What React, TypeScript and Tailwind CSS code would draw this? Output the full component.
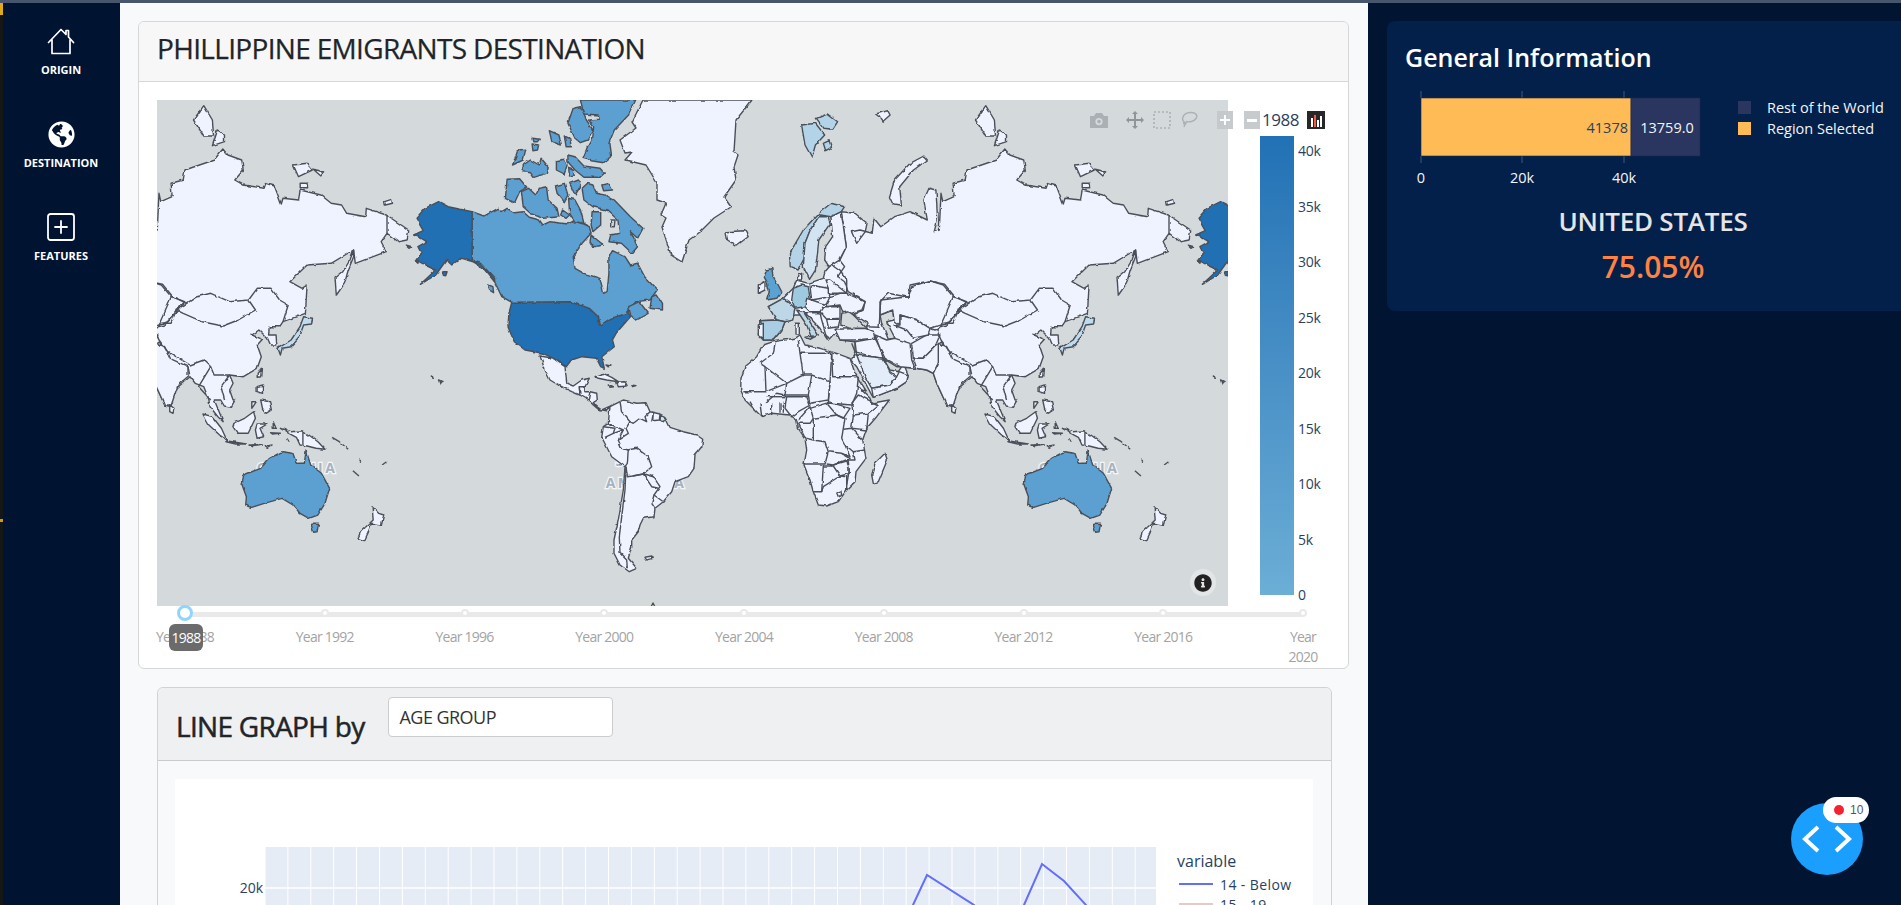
import React from 'react';
import { FaGlobeAmericas, FaInfoCircle } from 'react-icons/fa';

// crop origin + scale, so the map outlines can be read straight off the reference
type T = [number, number, number, number];
const C5: T = [150, 100, 2.8, 3];
const C6: T = [700, 100, 2.904, 3];
const C7R: T = [932, 400, 2.8, 3];
const C5R: T = [932, 100, 2.8, 3];
const C10: T = [740, 260, 3, 3];
const C11: T = [730, 370, 3, 3];
const C12: T = [540, 350, 3, 3];

const pts = (t: T, s: string) =>
  s.trim().split(/\s+/).map((p) => {
    const [x, y] = p.split(',').map(Number);
    return `${(t[0] + x / t[2]).toFixed(1)},${(t[1] + y / t[3]).toFixed(1)}`;
  }).join(' ');

const LAND = '#eff3ff';
const SEA = '#d4d9dc';
const CAN = '#5b9fd1';
const USA = '#2070b4';

const shapes: [string, string][] = [
  // eurasia
  [LAND, [
    pts(C6, '410,335 450,340 485,370 480,395 455,430 440,395 465,390 500,400 505,355 525,380 565,350 610,335 660,360 650,300 665,265 685,270 690,355 680,395 695,390 700,280 705,305 738,290 735,250 770,240 775,210 860,180 885,147 900,165 940,180 945,210 920,240 945,255 1005,265 1010,250 1035,258 1055,312 1060,295 1105,300 1110,270 1170,285 1200,310 1230,315 1245,340 1300,350 1302,325 1360,345 1425,390 1420,420 1395,425 1362,400 1345,425 1360,455 1270,490 1265,450 1240,465 1200,490 1130,495 1080,545 1115,565 1130,555 1125,640 1060,665 1050,680 1020,680 1018,705 1040,705 1042,738 1025,738 1015,715 990,690 970,705 1000,718 985,735 997,770 985,805 945,830 905,825 915,850 905,870 915,900'),
    pts(C7R, '240,0 228,22 208,18 198,0 180,0 205,65 190,50 168,20 165,0'),
    pts(C6, '845,900 830,860 805,850 790,830 745,870 732,900'),
    pts(C10, '640,440 620,435 590,370 580,340 560,330 530,325 495,322 505,345 500,365 470,385 400,412 395,405 350,320 332,300 345,275 345,245 300,240 290,215 268,240 250,210 235,185 205,165 165,165 135,185 125,210 100,240 70,240 55,225 60,182 110,180 85,140 130,115 145,100 160,85 170,60 205,70 250,55 255,35 275,12 300,0'),
    pts(C6, '425,440'),
  ].join(' ')],
  [LAND, pts(C6, '380,350 410,335 425,440 405,480 375,500 362,480 365,440 385,410')],
  ['#b5d3e7', pts(C6, '260,460 300,390 345,340 380,310 420,320 410,335 380,350 350,345 320,390 305,430 305,470 285,510 262,500')],
  ['#d2e3f2', pts(C6, '345,350 372,350 378,370 345,420 340,470 335,510 318,538 300,500 305,430 320,390')],
  [LAND, pts(C6, '75,395 130,392 140,410 105,437 80,420')],
  ['#b3d3e8', pts(C6, '295,75 335,70 362,105 335,135 325,172 305,135')],
  ['#b3d3e8', pts(C6, '338,55 370,42 400,65 385,88 360,85')],
  ['#b3d3e8', pts(C6, '358,130 375,122 382,142 365,152')],
  [LAND, pts(C6, '510,42 545,32 552,45 530,65 520,50')],
  [LAND, pts(C6, '550,290 565,240 610,190 650,168 660,180 620,210 580,260 585,315 560,312')],
  [LAND, pts(C6, '830,17 855,60 858,108 830,108 800,60')],
  [LAND, pts(C6, '870,90 890,105 890,125 855,137')],
  [LAND, pts(C6, '1090,195 1130,190 1145,210 1105,230')],
  [LAND, pts(C6, '1148,208 1178,215 1170,228')],
  [LAND, pts(C6, '1110,250 1130,250 1132,263 1110,263')],
  [LAND, pts(C6, '1355,305 1375,298 1378,310 1357,315')],
  // europe
  ['#5aa2d2', pts(C10, '80,30 95,25 100,50 112,70 125,95 110,115 80,120 88,95 80,65 72,50')],
  [LAND, pts(C10, '55,75 75,65 75,90 55,100')],
  ['#bdd7e7', pts(C10, '85,140 130,115 145,125 165,145 158,180 135,185 110,180')],
  ['#a9cde5', pts(C10, '60,182 110,180 135,185 125,210 100,240 70,240 70,200')],
  [LAND, pts(C10, '55,195 70,190 70,235 55,225')],
  ['#9ecae1', pts(C10, '160,85 185,75 205,80 210,115 195,140 165,145 155,120')],
  [LAND, pts(C10, '175,45 185,40 185,60 170,60')],
  ['#bdd7e7', pts(C10, '170,150 190,155 235,225 215,235 200,195')],
  ['#bdd7e7', pts(C10, '195,232 220,228 212,238')],
  [LAND, pts(C10, '168,190 178,190 178,222 168,222')],
  [LAND, pts(C10, '210,75 265,85 270,110 215,120')],
  [LAND, pts(C10, '270,60 320,100 300,100 265,100 265,85 255,60')],
  [LAND, pts(C10, '270,110 300,100 320,100 375,125 370,150 340,165 310,160 300,135 255,140')],
  [LAND, pts(C10, '200,115 215,120 260,135 240,155 210,155 195,140')],
  [LAND, pts(C10, '250,140 300,140 300,175 260,178 240,155')],
  [LAND, pts(C10, '260,178 300,178 295,200 265,205')],
  [LAND, pts(C10, '195,158 240,158 245,180 262,238 240,205')],
  [LAND, pts(C10, '285,208 375,205 400,215 405,235 345,240 300,240')],
  // seas
  [SEA, pts(C10, '305,160 325,155 350,170 385,190 380,205 330,205 302,195')],
  [SEA, pts(C10, '420,165 458,150 462,180 440,185 465,235 445,238 425,190')],
  [SEA, pts(C10, '430,295 470,320 485,320 475,335 450,330')],
  // middle east / central asia
  [LAND, pts(C10, '345,245 405,235 420,265 430,295 395,290 350,285')],
  ['#e3edf9', pts(C10, '350,285 395,290 430,295 450,335 470,350 450,375 395,385 375,350')],
  [LAND, pts(C10, '395,385 450,375 470,350 478,335 505,345 500,365 470,385 400,412')],
  [LAND, pts(C10, '405,225 440,240 465,235 510,250 515,300 525,325 480,320 435,295 420,265')],
  [LAND, pts(C10, '515,250 560,225 600,225 585,260 550,295 520,295')],
  [LAND, pts(C10, '520,295 550,295 585,260 605,245 620,295 595,310 580,340 560,330 530,325')],
  [LAND, pts(C10, '595,250 620,260 635,295 690,320 695,345 660,375 640,435 620,435 590,370 580,340 595,310')],
  [LAND, pts(C10, '635,435 648,445 645,460 635,455')],
  [LAND, pts(C10, '420,125 445,100 505,112 515,80 570,62 610,75 640,110 680,125 660,150 630,185 570,205 530,180 480,165 480,195 462,180 458,150 420,165')],
  [LAND, pts(C10, '462,195 480,195 480,165 530,180 570,205 565,225 520,235 500,210')],
  // asia islands
  ['#bfdcef', pts(C5R, '430,650 455,655 452,672 430,675 425,690 420,710 395,740 370,745 365,765 358,745 395,720 420,680')],
  [LAND, pts(C5R, '570,450 560,480 540,515 518,535 522,585 545,550 555,510 570,470')],
  [LAND, pts(C5R, '303,820 312,808 310,830 303,832')],
  [LAND, pts(C5R, '300,860 315,855 315,880 300,875')],
  [LAND, pts(C7R, '310,0 335,5 340,30 325,40 315,25')],
  [LAND, pts(C7R, '285,5 298,5 285,25')],
  [LAND, pts(C7R, '148,42 175,50 200,85 215,120 195,105 165,75')],
  [LAND, pts(C7R, '212,122 270,132 240,132 213,125')],
  [LAND, pts(C7R, '235,70 265,55 290,35 295,55 275,100 245,100 232,80')],
  [LAND, pts(C7R, '300,72 328,72 308,85 318,110 300,115 295,90')],
  [LAND, pts(C7R, '365,85 395,95 425,92 445,105 470,125 490,148 465,145 440,138 420,135 410,112 385,98')],
  [LAND, pts(C7R, '345,65 353,85 345,85')],
  [LAND, pts(C7R, '335,98 365,100 340,102')],
  [LAND, pts(C7R, '280,135 315,135 290,140')],
  [LAND, pts(C7R, '320,140 342,135 325,145')],
  // australia, nz
  [CAN, pts(C7R, '262,225 310,205 335,175 370,155 400,160 410,190 432,190 437,152 450,195 480,220 503,265 490,310 470,345 445,355 420,340 400,315 370,295 320,310 285,322 268,315 270,290 258,255')],
  [CAN, pts(C7R, '450,370 472,370 468,395 458,397')],
  [LAND, pts(C7R, '622,320 640,340 655,345 648,375 620,370 610,400 600,422 582,415 590,395 625,360')],
  // africa
  [LAND, [
    pts(C10, '100,245 70,255 50,290 15,320 3,355'),
    pts(C11, '32,60 45,90 70,115 95,140 125,130 180,135 200,150 205,175 225,205 230,240 222,285 240,330 250,365 265,405 290,408 325,395 350,360 375,335 378,305 408,265 398,210 410,175 440,140 478,90 425,100 420,85 385,50'),
    pts(C10, '380,395 345,340 330,295 290,280 240,265 195,255 180,225 165,235'),
  ].join(' ')],
  [LAND, pts(C11, '465,250 472,270 445,335 430,340 425,315 435,280')],
  // north america
  [LAND, pts(C12, '0,18 40,25 60,40 75,50 80,100 100,108 125,90 148,85 135,110 118,110 120,135 95,125 55,105 30,90 15,60')],
  [LAND, pts(C12, '118,110 135,110 135,125 150,125 170,130 172,150 160,158 170,170 185,180 212,168 200,182 175,178 160,165 145,150 120,135')],
  [USA, pts(C5, '1013,607 1180,605 1230,625 1255,650 1258,675 1290,655 1335,630 1345,650 1325,675 1305,700 1295,720 1300,740 1265,770 1272,805 1262,800 1250,775 1210,770 1180,780 1165,800 1130,775 1100,760 1050,750 1020,725 1002,680 1005,640')],
  [CAN, pts(C5, '902,335 935,348 975,325 985,335 1000,325 1020,338 1045,335 1062,352 1090,360 1100,375 1120,365 1170,372 1190,360 1230,380 1235,400 1210,430 1185,470 1190,505 1215,520 1260,535 1270,580 1280,575 1285,520 1285,470 1295,452 1330,470 1345,495 1365,490 1385,530 1420,570 1400,600 1360,605 1335,640 1290,655 1262,675 1255,650 1230,625 1180,605 1013,607 985,590 965,545 930,500 902,483')],
  [USA, pts(C5, '808,305 835,320 902,335 902,483 925,490 965,535 965,545 940,510 905,485 870,475 845,495 830,480 800,525 757,553 800,510 770,495 745,480 760,460 750,440 775,425 760,415 738,405 765,392 745,355 770,325')],
  [USA, pts(C5, '820,515 832,515 828,527 818,525')],
  [USA, pts(C5, '715,435 733,440 725,445')],
  [USA, pts(C5, '742,482 752,482 750,490')],
  [USA, pts(C5, '788,828 792,832 790,836')],
  [USA, pts(C5, '808,840 818,845 812,852')],
  [CAN, pts(C5, '948,555 960,560 962,578 950,570')],
  [CAN, pts(C5, '1185,25 1205,20 1215,40 1222,60 1228,70 1240,90 1225,120 1205,128 1190,115 1170,70')],
  [CAN, pts(C5, '1205,0 1360,0 1340,45 1300,90 1285,130 1290,170 1270,188 1235,182 1212,175 1225,140 1240,110 1242,80 1228,60 1258,58 1255,45 1215,42')],
  [CAN, pts(C5, '1118,92 1145,105 1152,135 1125,125')],
  [CAN, pts(C5, '1160,108 1175,115 1180,140 1165,140')],
  [CAN, pts(C5, '1072,115 1090,118 1085,125 1075,125')],
  [CAN, pts(C5, '1070,132 1088,135 1085,150 1072,152')],
  [CAN, pts(C5, '1030,150 1052,148 1045,180 1015,195')],
  [CAN, pts(C5, '1045,195 1065,180 1090,195 1095,175 1115,200 1110,220 1075,232 1065,218 1045,215')],
  [CAN, pts(C5, '1138,182 1160,178 1168,195 1160,222 1138,210')],
  [CAN, pts(C5, '1172,205 1185,210 1188,225 1175,228')],
  [CAN, pts(C5, '1170,165 1190,170 1215,198 1260,205 1272,220 1260,232 1215,232 1190,210 1170,185')],
  [CAN, pts(C5, '1000,238 1035,236 1055,262 1035,275 1020,310 995,295')],
  [CAN, pts(C5, '1040,275 1060,265 1080,285 1090,265 1110,260 1115,300 1140,325 1145,350 1100,355 1065,340 1045,320')],
  [CAN, pts(C5, '1135,258 1160,250 1170,285 1160,305 1140,280')],
  [CAN, pts(C5, '1175,250 1200,240 1208,255 1190,285')],
  [CAN, pts(C5, '1210,265 1225,250 1240,255 1250,280 1275,285 1300,300 1345,350 1380,385 1365,415 1345,395 1365,440 1350,460 1320,430 1285,425 1290,405 1315,400 1310,360 1280,330 1240,320 1215,300')],
  [CAN, pts(C5, '1265,255 1285,250 1295,270 1270,272')],
  [CAN, pts(C5, '1172,295 1190,300 1205,330 1215,370 1190,365 1175,340')],
  [CAN, pts(C5, '1238,335 1262,335 1262,375 1240,395 1235,375')],
  [CAN, pts(C5, '1155,330 1175,345 1165,355 1150,345')],
  [SEA, pts(C5, '1290,360 1302,360 1300,380 1290,380')],
  [CAN, pts(C5, '1235,405 1270,435 1240,440 1232,425')],
  [CAN, pts(C5, '1405,590 1420,585 1435,610 1435,630 1400,625')],
  [CAN, pts(C5, '1340,620 1370,605 1395,640 1360,660 1345,645')],
  // greenland, page coordinates
  [LAND, '643,100 632,122 636,128 620,140 625,153 632,152 625,160 646,165 657,183 657,200 666,203 661,215 666,218 662,227 671,255 682,262 689,240 700,232 714,218 731,207 724,197 736,180 734,167 738,155 734,152 736,120 752,100'],
  // caribbean
  [LAND, pts(C12, '165,80 190,70 215,82 235,95 200,90 175,85')],
  [LAND, pts(C12, '230,97 255,95 262,108 235,110')],
  [LAND, pts(C12, '205,105 218,110 207,112')],
  [LAND, pts(C12, '275,105 288,107 278,110')],
  [LAND, pts(C12, '198,45 213,48 204,50')],
  // south america
  [LAND, pts(C12, '210,170 240,155 250,150 290,160 318,158 330,185 360,192 375,200 390,232 430,245 470,255 488,268 485,290 465,315 462,355 445,380 405,395 395,425 370,455 345,475 342,500 310,505 300,525 295,545 275,570 275,590 265,625 290,655 268,665 240,645 222,610 222,570 235,510 250,420 255,350 215,320 185,262 190,230 205,220')],
  ['#cfe2f2', pts(C12, '362,195 378,205 370,215 360,212')],
  [LAND, pts(C12, '315,622 335,618 340,625 320,630')],
  [LAND, '651,607 653,603 655,607'],
];

const lines: [T, string][] = [
  [C6, '1362,345 1362,400'],
  [C6, '405,480 420,500 400,530 420,545 430,575 480,605 470,630 440,640 480,680 520,682 525,600 605,590 610,555 665,543 710,553 740,590 780,610 810,590 850,580 905,605 960,600 985,565 1025,565 1050,600 1075,615 1060,665'],
  [C6, '780,610 750,630 770,640 825,665 885,678 930,660 980,630 960,600'],
  [C6, '750,630 735,670 700,670 690,695 700,720 725,755 790,795 830,780 850,800 860,825 905,825'],
  [C6, '850,800 815,860 850,900'],
  [C6, '905,825 880,860 890,900'],
  [C10, '275,12 300,30 320,60 320,100'],
  [C10, '640,110 600,200 620,195 680,125'],
  [C10, '600,205 585,210 570,205'],
  [C10, '690,320 690,345'],
  [C10, '340,290 345,275 395,290'],
  [C10, '60,310 100,280 105,250'],
  [C10, '60,310 75,320 78,395 10,395'],
  [C10, '75,320 140,370 190,345 180,280 175,240'],
  [C10, '180,280 275,280 278,350 350,350'],
  [C10, '190,345 215,345 270,365 275,280'],
  [C10, '78,395 140,370 135,405 110,400 75,430'],
  [C10, '135,405 205,405 215,345'],
  [C10, '205,405 210,430 265,420 270,365'],
  [C10, '270,365 265,430 275,430 335,435 350,400 355,350'],
  [C11, '170,80 230,80 240,105 205,125 185,140 165,115 170,80'],
  [C11, '205,150 240,110 250,145 240,160 205,160'],
  [C11, '240,115 290,100 320,135 250,145'],
  [C11, '295,95 360,115 340,145 320,135'],
  [C11, '365,100 385,75 425,95 445,105 415,130 370,135 365,100'],
  [C11, '370,135 365,175 410,180 415,130'],
  [C11, '250,145 250,210 228,205'],
  [C11, '320,135 345,145 340,175 335,205 345,225 360,260 335,250 295,245 285,215 250,210'],
  [C11, '340,178 365,175 398,210'],
  [C11, '340,220 370,245 405,240'],
  [C11, '295,245 285,282 222,282'],
  [C11, '335,250 360,265 310,285 290,282'],
  [C11, '280,285 275,365 250,365'],
  [C11, '280,288 310,288 330,318 280,350 275,365'],
  [C11, '310,285 355,272 358,310 330,318 350,320 350,360'],
  [C11, '370,245 375,270 350,270 358,300 350,345'],
  [C11, '320,368 333,363 335,375 325,380 320,368'],
  [C11, '125,100 125,135'],
  [C11, '150,100 150,128'],
  [C11, '160,95 160,128'],
  [C11, '90,100 95,140'],
  [C11, '60,95 75,120'],
  [C11, '110,80 170,80'],
  [C11, '205,160 225,200'],
  [C12, '240,155 245,185 270,215 258,235 265,250 235,270 250,240 205,220'],
  [C12, '270,215 280,220 300,205 320,215 315,200 330,185'],
  [C12, '335,215 340,190 338,212 358,210 360,192'],
  [C12, '190,230 225,235 220,250 195,262'],
  [C12, '220,250 250,240'],
  [C12, '235,270 245,295 265,300 262,340 255,350'],
  [C12, '262,300 290,295 325,320 335,350 310,372 340,380 360,410 342,435 370,455'],
  [C12, '335,460 342,435'],
  [C12, '335,460 345,475'],
  [C12, '310,372 278,378 262,380 258,350'],
  [C12, '278,378 310,372 335,410 355,415'],
  [C12, '258,350 255,420 245,500 238,560 240,610 260,630 262,655'],
  [C12, '135,110 135,125'],
  [C12, '150,125 145,150'],
  [C7R, '428,95 428,138'],
  [C7R, '510,112 530,125 555,148'],
  [C7R, '585,175 590,188'],
  [C7R, '650,195 665,183'],
  [C7R, '568,212 585,228'],
  [C7R, '385,115 390,125'],
  [C10, '345,275 335,250'],
];

const World = () => (
  <g>
    <g fontFamily="'Open Sans', sans-serif" fontSize="14" fontWeight="700" letterSpacing="2.5" textAnchor="middle" fill="#a6b2be" stroke="#f4f6f8" strokeWidth="2.5" paintOrder="stroke">
      <text x="1079" y="473">OCEANIA</text>
      <text x="646" y="466">SOUTH</text>
      <text x="646" y="488">AMERICA</text>
    </g>
    <g stroke="#4a5059" strokeWidth="1.4" strokeLinejoin="round" filter="url(#rough)">
      {shapes.map(([fill, p], i) => (
        <polygon key={i} points={p} fill={fill} />
      ))}
      {lines.map(([t, p], i) => (
        <polyline key={i} points={pts(t, p)} fill="none" />
      ))}
    </g>
  </g>
);

const WorldMap = () => (
  <svg viewBox="157 100 1071 506" className="block w-[1071px] h-[506px] shrink-0 bg-[#d4d9dc]">
    <defs>
      {/* roughens the hand traced coastlines a bit */}
      <filter id="rough" x="-5%" y="-5%" width="110%" height="110%">
        <feTurbulence type="fractalNoise" baseFrequency="0.14" numOctaves="2" seed="4" result="n" />
        <feDisplacementMap in="SourceGraphic" in2="n" scale="3" xChannelSelector="R" yChannelSelector="G" />
      </filter>
    </defs>
    <g transform="translate(-782 0)"><World /></g>
    <World />
    <g transform="translate(782 0)"><World /></g>
  </svg>
);

const Modebar = () => (
  <div className="absolute left-[933px] top-[10px] flex items-center h-[20px] text-[#a9aeb2] opacity-95">
    <svg width="18" height="16" viewBox="0 0 18 16" className="mr-[18px]" fill="currentColor">
      <path d="M0 4h4l2-3h6l2 3h4v12H0zM9 6a3.6 3.6 0 1 0 0 7.2A3.6 3.6 0 0 0 9 6zm0 1.8a1.8 1.8 0 1 1 0 3.6 1.8 1.8 0 0 1 0-3.6z" fillRule="evenodd" />
    </svg>
    <svg width="18" height="18" viewBox="0 0 18 18" className="mr-[9px] text-[#8c9296]" fill="currentColor">
      <path d="M9 0l3 3h-2v5h5V6l3 3-3 3v-2h-5v5h2l-3 3-3-3h2v-5H3v2L0 9l3-3v2h5V3H6z" />
    </svg>
    <svg width="18" height="18" viewBox="0 0 18 18" className="mr-[9px]" fill="none" stroke="currentColor" strokeWidth="1.6" strokeDasharray="2 2">
      <rect x="1" y="1" width="16" height="16" />
    </svg>
    <svg width="18" height="18" viewBox="0 0 18 18" className="mr-[19px]" fill="none" stroke="currentColor" strokeWidth="1.4">
      <path d="M4 11C1 8 3 2 10 1.500c6-.5 8 3 6 6-2 3-7 4-10 3M4 11c-1 2 1 3 2 1.500 0-1-2-1.500-2-1.500M5 13l-1 3" />
    </svg>
    <span className="w-[16px] h-[18px] mr-[11px] bg-[#c6c9cb] flex items-center justify-center">
      <svg width="10" height="10" viewBox="0 0 10 10" fill="#fff"><path d="M4 0h2v4h4v2H6v4H4V6H0V4h4z" /></svg>
    </span>
    <span className="w-[16px] h-[18px] bg-[#c6c9cb] flex items-center justify-center">
      <svg width="10" height="3" viewBox="0 0 10 3" fill="#fff"><path d="M0 0h10v3H0z" /></svg>
    </span>
    <span className="ml-[47px] w-[18px] h-[18px] bg-[#1c1c1c] flex items-end justify-center gap-[1px] pb-[2px]">
      <i className="block w-[2px] h-[9px] bg-white" />
      <i className="block w-[2px] h-[12px] bg-[#ef553b]" />
      <i className="block w-[2px] h-[7px] bg-white" />
      <i className="block w-[2px] h-[11px] bg-white" />
    </span>
  </div>
);

const colorTicks = ['40k', '35k', '30k', '25k', '20k', '15k', '10k', '5k', '0'];
const years = [1988, 1992, 1996, 2000, 2004, 2008, 2012, 2016, 2020];

const Slider = () => (
  <div className="relative ml-[28px] mr-[45px] mt-[5px] h-[57px]">
    <div className="h-[5px] bg-[#e9e9e9] rounded-full relative top-[1px]">
      <div className="absolute inset-x-0 top-[-2px] flex justify-between">
        {years.map((y) => (
          <span key={y} className="block w-0 relative">
            <span className="absolute left-[-4px] top-[-1px] w-[8px] h-[8px] rounded-full bg-white border-2 border-[#e9e9e9]" />
          </span>
        ))}
      </div>
    </div>
    <div className="flex justify-between mt-[11px] text-[14px] leading-[20px] text-[#a3a3a3] tracking-[-0.055em]">
      {years.map((y) => (
        <span key={y} className="block w-0 flex justify-center">
          {y === 2020 ? (
            <span className="block shrink-0 w-[40px] text-center">Year {y}</span>
          ) : (
            <span className="block shrink-0 whitespace-nowrap">Year {y}</span>
          )}
        </span>
      ))}
    </div>
    {/* handle + tooltip */}
    <div className="absolute left-[-8px] top-[-6px] w-[16px] h-[16px] rounded-full bg-white border-[3px] border-[#91d5ff]" />
    <div className="absolute left-[-16px] top-[13px] w-[34px] h-[27px] rounded-[6px] bg-[#6b6b6b] text-white text-[14px] tracking-[-0.05em] flex items-center justify-center">1988</div>
  </div>
);

const LineChart = () => {
  const xs = Array.from({ length: 39 }, (_, i) => 90 + i * 22.9);
  return (
    <svg viewBox="0 0 1138 500" className="block w-[1138px] h-[500px] bg-white" fontFamily="'Open Sans', sans-serif">
      <rect x="90" y="68" width="891" height="432" fill="#e5ecf6" />
      {xs.map((x) => (
        <line key={x} x1={x} x2={x} y1="68" y2="500" stroke="#fff" strokeWidth="1" />
      ))}
      <line x1="90" x2="981" y1="109" y2="109" stroke="#fff" strokeWidth="1.5" />
      <text x="88" y="114" textAnchor="end" fontSize="14" fill="#2a3f5f">20k</text>
      <polyline points="700,190 738,126 752,96 799,126 825,160 849,126 867,85 889,102 911,126 940,180" fill="none" stroke="#636efa" strokeWidth="2" />
      <text x="1002" y="88" fontSize="16" fill="#2a3f5f">variable</text>
      <line x1="1004" x2="1038" y1="105" y2="105" stroke="#636efa" strokeWidth="2" />
      <text x="1045" y="111" fontSize="14" fill="#2a3f5f" letterSpacing="0.4">14 - Below</text>
      <line x1="1004" x2="1038" y1="125" y2="125" stroke="#f5c4ba" strokeWidth="2" />
      <text x="1045" y="131" fontSize="14" fill="#2a3f5f" letterSpacing="0.4">15 - 19</text>
    </svg>
  );
};

const InfoChart = () => (
  <svg viewBox="0 0 532 110" className="block w-[532px] h-[110px]" fontFamily="'Open Sans', sans-serif">
    {[34, 135, 237].map((x) => (
      <g key={x} stroke="#3f5878" strokeWidth="1">
        <line x1={x} x2={x} y1="3" y2="10" />
        <line x1={x} x2={x} y1="68" y2="75" />
      </g>
    ))}
    <rect x="34" y="10" width="210" height="58" fill="#ffbb55" stroke="#1d2a4d" strokeWidth="0.6" />
    <rect x="244" y="10" width="69" height="58" fill="#2a3560" stroke="#1d2a4d" strokeWidth="0.6" />
    <text x="241" y="45" textAnchor="end" fontSize="14.500" fill="#2a3f5f">41378</text>
    <text x="280" y="45" textAnchor="middle" fontSize="14.500" fill="#f2f5fa">13759.0</text>
    {[['0', 34], ['20k', 135], ['40k', 237]].map(([t, x]) => (
      <text key={t} x={x} y="95" textAnchor="middle" fontSize="14.500" fill="#f2f5fa">{t}</text>
    ))}
    <rect x="351" y="13" width="13" height="13" fill="#2a3560" />
    <rect x="351" y="34" width="13" height="13" fill="#ffbb55" />
    <text x="380" y="25" fontSize="14.500" fill="#f2f5fa">Rest of the World</text>
    <text x="380" y="46" fontSize="14.500" fill="#f2f5fa">Region Selected</text>
  </svg>
);

const navItems = [
  {
    label: 'ORIGIN',
    icon: (
      <svg width="28" height="27" viewBox="0 0 28 27" fill="none" stroke="#fff" strokeWidth="1.7" strokeLinejoin="round" strokeLinecap="round">
        <path d="M1.500 14.500L14 1.500l5 5V2.500h2.500v6.500L26.500 14.500M5 11.500V25.500h18V11.500" />
      </svg>
    ),
  },
  { label: 'DESTINATION', icon: <FaGlobeAmericas className="text-white" size={27} /> },
  {
    label: 'FEATURES',
    icon: (
      <svg width="28" height="28" viewBox="0 0 28 28" fill="none" stroke="#fff" strokeWidth="1.8" strokeLinecap="round">
        <rect x="1" y="1" width="26" height="26" rx="2.500" />
        <path d="M14 8v12M8 14h12" />
      </svg>
    ),
  },
];

const App: React.FC = () => {
  return (
    <div className="w-[1901px] h-[905px] overflow-hidden flex flex-col bg-[#011532] font-['Open_Sans',sans-serif]">
      <div className="h-[3px] shrink-0 bg-[#47566c]" />
      <div className="flex-1 flex min-h-0">
        <div className="w-[3px] shrink-0 flex flex-col bg-[#161616]">
          <div className="h-[12px] bg-[#e0ac16]" />
          <div className="h-[504px]" />
          <div className="h-[3px] bg-[#c99a1c]" />
        </div>
        <nav className="w-[117px] shrink-0 bg-[#001330] flex flex-col items-center pt-[24px] pr-[1px]">
          {navItems.map((item) => (
            <div key={item.label} className="h-[93px] flex flex-col items-center">
              <div className="h-[28px] flex items-center justify-center">{item.icon}</div>
              <span className="mt-[7px] text-white text-[11px] leading-[16px] font-bold tracking-normal">{item.label}</span>
            </div>
          ))}
        </nav>

        <main className="w-[1248px] shrink-0 bg-[#f8f9fa] overflow-hidden">
          <section className="ml-[18px] mt-[18px] w-[1211px] h-[648px] rounded-[6px] border border-[#d6d7d8] bg-white">
            <header className="h-[60px] bg-[#f7f7f7] border-b border-[#d6d7d8] rounded-t-[6px] pl-[18px] pb-[8px] flex items-center">
              <h1 className="text-[28px] text-[#212529] tracking-[-0.024em] leading-none [-webkit-text-stroke:0.25px_#212529]">PHILLIPPINE EMIGRANTS DESTINATION</h1>
            </header>
            <div className="pl-[18px] pt-[18px]">
              <div className="relative flex">
                <WorldMap />
                <div className="ml-[32px] pt-[36px] flex">
                  <div className="w-[34px] h-[459px] bg-linear-to-b from-[#2171b5] to-[#6baed6]" />
                  <div className="ml-[4px] mt-[5px] h-[464px] flex flex-col justify-between text-[14px] leading-[20px] text-[#2a3f5f] tracking-[-0.02em]">
                    {colorTicks.map((t) => <span key={t}>{t}</span>)}
                  </div>
                </div>
                <span className="absolute left-[1105px] top-[8px] text-[17px] leading-[24px] text-[#2a3f5f] tracking-[-0.03em]">1988</span>
                <Modebar />
                <span className="absolute left-[1033px] top-[469px] w-[26px] h-[27px] rounded-full bg-[#e3e6e7] flex items-center justify-center">
                  <FaInfoCircle size={18} className="text-[#222]" />
                </span>
              </div>
              <Slider />
            </div>
          </section>

          <section className="ml-[37px] mt-[18px] w-[1175px] rounded-[6px] border border-[#d0d2d4]">
            <header className="h-[73px] bg-[#eff0f2] border-b border-[#c9cbcd] rounded-t-[6px] flex items-start pl-[18px]">
              <h2 className="mt-[22px] text-[28px] leading-[32px] text-[#212529] tracking-[-0.025em] [-webkit-text-stroke:0.5px_#212529]">LINE GRAPH by</h2>
              <div className="ml-[23px] mt-[9px] w-[225px] h-[40px] rounded-[4px] border border-[#cccccc] bg-white pl-[11px] flex items-center text-[18px] text-[#333] tracking-[-0.03em]">AGE GROUP</div>
            </header>
            <div className="pl-[17px] pt-[18px]">
              <LineChart />
            </div>
          </section>
        </main>

        <aside className="flex-1 min-w-0 overflow-hidden pl-[19px] pt-[18px]">
          <div className="w-[532px] h-[290px] rounded-[8px] bg-[#03204a]">
            <h2 className="pt-[19px] pl-[18px] text-[25px] leading-[34px] font-semibold text-white tracking-normal">General Information</h2>
            <div className="mt-[14px]"><InfoChart /></div>
            <p className="mt-[5px] text-center text-[26px] leading-[36px] font-semibold text-[#e5e5e5] tracking-[-0.01em]">UNITED STATES</p>
            <p className="mt-[7px] text-center text-[30px] leading-[42px] font-semibold text-[#ff8242] tracking-normal">75.05%</p>
          </div>
        </aside>
      </div>

      {/* floating devtools button */}
      <div className="fixed left-[1791px] top-[803px] w-[72px] h-[72px] rounded-full bg-[#1a9fff] flex items-center justify-center">
        <svg width="50" height="30" viewBox="0 0 50 30" fill="none" stroke="#fff" strokeWidth="4">
          <path d="M16 3L3 15l13 12M34 3l13 12-13 12" />
        </svg>
        <div className="absolute left-[32px] top-[-6px] w-[46px] h-[26px] rounded-full bg-white flex items-center pl-[11px] gap-[6px] text-[12px] text-[#555] font-['Liberation_Sans',sans-serif]">
          <span className="block w-[10px] h-[10px] rounded-full bg-[#f5222d]" />
          10
        </div>
      </div>
    </div>
  );
};

export default App;
